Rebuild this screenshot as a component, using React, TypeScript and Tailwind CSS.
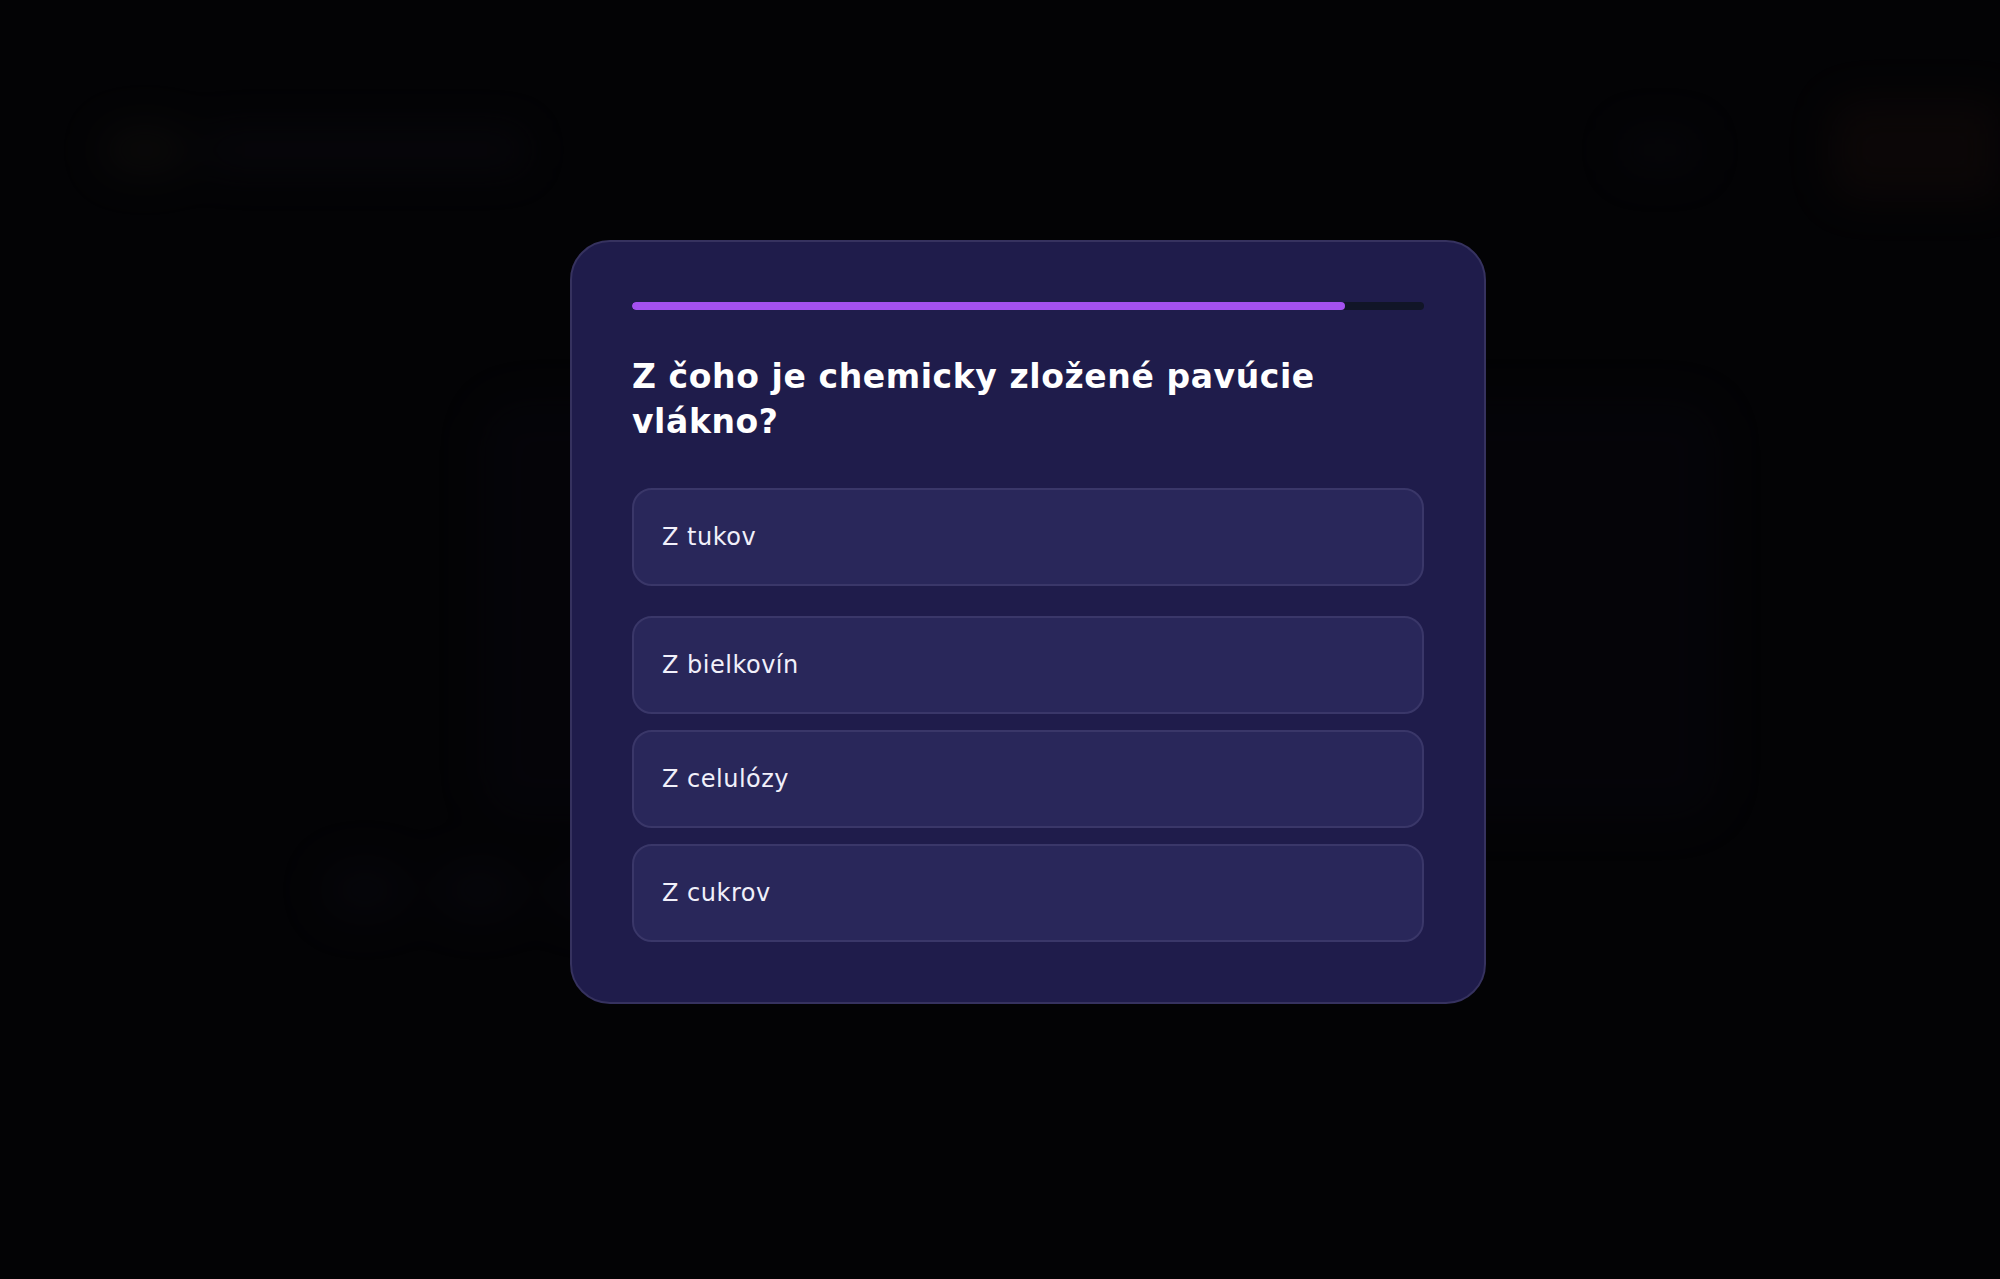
import React from 'react';

const options = ['Z tukov', 'Z bielkovín', 'Z celulózy', 'Z cukrov'];

export default function App() {
    const progress = 90;

    return (
        <div className="relative h-screen w-full overflow-hidden bg-[#030305]" style={{ fontFamily: '"DejaVu Sans", "Noto Sans", sans-serif' }}>
            {/* Blurred page behind the modal */}
            <div className="pointer-events-none flex h-full flex-col blur-[20px] opacity-30">
                <div className="flex items-center justify-between pl-[100px] pt-[100px]">
                    <div className="flex items-center gap-4">
                        <div className="h-[50px] w-[90px] rounded-full bg-[#1a1812]" />
                        <div className="h-[40px] w-[320px] rounded-xl bg-[#121019]" />
                    </div>
                    <div className="flex items-center gap-[130px]">
                        <div className="h-[44px] w-[80px] rounded-xl bg-[#0e0d12]" />
                        <div className="h-[100px] w-[170px] rounded-l-3xl bg-[#1f100c]" />
                    </div>
                </div>
                <div className="mt-[200px] flex justify-center gap-6 pl-[200px]">
                    <div className="h-[420px] w-[1240px] rounded-[40px] bg-[#0a0912]" />
                </div>
                <div className="ml-[320px] mt-[40px] flex gap-6">
                    {[0, 1, 2, 3, 4, 5, 6].map((i) => (
                        <div key={i} className="h-[60px] w-[90px] rounded-full bg-[#0d0c16]" />
                    ))}
                </div>
            </div>

            {/* Quiz modal */}
            <div className="absolute inset-0 flex justify-center pl-[56px] pt-[240px]">
                <div className="h-fit w-[916px] rounded-[40px] border-2 border-[#36325f] bg-[#1f1c4b] p-[60px]">
                    <div className="h-2 w-full overflow-hidden rounded-full bg-[#111527]">
                        <div className="h-full rounded-full bg-[#a451f0]" style={{ width: `${progress}%` }} />
                    </div>
                    <h2 className="mt-[44px] text-[33px] font-bold leading-[45px] tracking-[0.6px] text-white">
                        Z čoho je chemicky zložené pavúcie vlákno?
                    </h2>
                    <div className="mt-[44px] flex flex-col gap-4">
                        {options.map((opt, i) => (
                            <button
                                key={opt}
                                className={`flex h-[98px] w-full items-center rounded-[20px] border-2 border-[#3a3769] bg-[#29275a] px-[28px] text-left text-[24px] tracking-[0.5px] text-[#f1f0fa] ${i === 0 ? 'mb-[14px]' : ''}`}
                            >
                                {opt}
                            </button>
                        ))}
                    </div>
                </div>
            </div>
        </div>
    );
}
